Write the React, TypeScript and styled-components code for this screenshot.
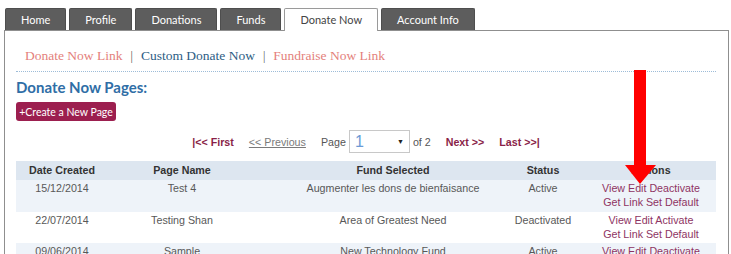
import styled, { createGlobalStyle } from "styled-components";

const GlobalStyle = createGlobalStyle`
  html, body {
    margin: 0;
    padding: 0;
    overflow: hidden;
    background: #ffffff;
    font-family: "Liberation Sans", Arial, sans-serif;
  }
`;

const MAROON = "#8a1f48";
const ACTION = "#8e3463";

export const Page = styled.div`
  position: relative;
  padding: 8px 2px 0 4px;
  width: 725px;
`;

export const TabBar = styled.div`
  display: flex;
  flex-direction: row;
  gap: 3px;
  padding-left: 1px;
`;

export const Tab = styled.div<{ $active?: boolean }>`
  height: 22px;
  line-height: 22px;
  padding: 0 15px;
  font-family: Lato, "Open Sans", sans-serif;
  font-size: 11px;
  color: ${(p) => (p.$active ? "#444" : "#fff")};
  background: ${(p) => (p.$active ? "#fff" : "#5d5d5d")};
  border: 1px solid ${(p) => (p.$active ? "#9a9a9a" : "#4e4e4e")};
  border-bottom: none;
  border-radius: 2px 2px 0 0;
  margin-bottom: -1px;
  position: relative;
  z-index: ${(p) => (p.$active ? 2 : 0)};
`;

export const Panel = styled.div`
  border: 1px solid #8f8f8f;
  padding: 0 12px 40px 11px;
  position: relative;
  z-index: 1;
`;

export const LinksRow = styled.div`
  display: flex;
  align-items: center;
  gap: 8px;
  margin-top: 16px;
  padding: 0 0 6px 9px;
  height: 18px;
  border-bottom: 1px dotted #9dbcd8;
  font-family: "Liberation Serif", "Times New Roman", serif;
  font-size: 13.5px;
`;

export const NavLink = styled.span<{ $current?: boolean }>`
  color: ${(p) => (p.$current ? "#2d5d84" : "#e47f7c")};
`;

export const Sep = styled.span`
  color: #555;
  font-size: 12px;
`;

export const Heading = styled.h2`
  margin: 6px 0 0;
  font-family: Lato, "Open Sans", sans-serif;
  font-size: 15px;
  line-height: 18px;
  font-weight: 700;
  color: #2f6ea6;
`;

export const CreateButton = styled.button`
  display: block;
  margin-top: 6px;
  height: 19px;
  width: 100px;
  padding: 0;
  border: none;
  border-radius: 3px;
  background: #9c1f4f;
  color: #fff;
  font-family: Lato, "Open Sans", sans-serif;
  font-size: 10.5px;
`;

export const Pager = styled.div`
  display: flex;
  justify-content: center;
  align-items: center;
  gap: 15px;
  margin-top: 9px;
  height: 23px;
  font-size: 10.7px;
`;

export const PagerLink = styled.span<{ $muted?: boolean }>`
  color: ${(p) => (p.$muted ? "#7a7a7a" : MAROON)};
  font-weight: ${(p) => (p.$muted ? 400 : 700)};
  text-decoration: ${(p) => (p.$muted ? "underline" : "none")};
`;

export const PageGroup = styled.div`
  display: flex;
  align-items: center;
  gap: 3px;
  color: #555;
`;

export const SelectBox = styled.div`
  display: flex;
  align-items: center;
  justify-content: space-between;
  box-sizing: border-box;
  width: 61px;
  height: 23px;
  padding: 0 5px;
  border: 1px solid #c8c8c8;
  background: #fff;
`;

export const SelectValue = styled.span`
  color: #6b9ad6;
  font-size: 16px;
`;

export const Caret = styled.span`
  color: #222;
  font-size: 7px;
`;

export const Table = styled.div`
  margin-top: 8px;
  font-size: 10.7px;
`;

export const Row = styled.div<{ $tone: "head" | "tint" | "plain" }>`
  display: grid;
  grid-template-columns: 92px 148px 244px 86px 130px;
  background: ${(p) =>
    p.$tone === "head" ? "#dde6f0" : p.$tone === "tint" ? "#eef3f9" : "#fff"};
  color: ${(p) => (p.$tone === "head" ? "#333" : "#585858")};
  font-weight: ${(p) => (p.$tone === "head" ? 700 : 400)};
  line-height: ${(p) => (p.$tone === "head" ? "19px" : "14px")};
  padding: ${(p) => (p.$tone === "head" ? "0" : "1px 0 2.5px")};
  min-height: ${(p) => (p.$tone === "head" ? "19px" : "28px")};
`;

export const Cell = styled.div<{ $indent?: number }>`
  text-align: center;
  padding-left: ${(p) => p.$indent ?? 0}px;
`;

export const Actions = styled.div`
  text-align: center;
  color: ${ACTION};
`;

export const Arrow = styled.svg`
  position: absolute;
  left: 620px;
  top: 70px;
  z-index: 5;
`;

const tabs = ["Home", "Profile", "Donations", "Funds", "Donate Now", "Account Info"];

const rows = [
  { date: "15/12/2014", name: "Test 4", fund: "Augmenter les dons de bienfaisance", status: "Active", toggle: "Deactivate" },
  { date: "22/07/2014", name: "Testing Shan", fund: "Area of Greatest Need", status: "Deactivated", toggle: "Activate" },
  { date: "09/06/2014", name: "Sample", fund: "New Technology Fund", status: "Active", toggle: "Deactivate" },
];

export default function App() {
  return (
    <>
      <GlobalStyle />
      <Page>
        <TabBar>
          {tabs.map((t) => (
            <Tab key={t} $active={t === "Donate Now"}>
              {t}
            </Tab>
          ))}
        </TabBar>
        <Panel>
          <LinksRow>
            <NavLink>Donate Now Link</NavLink>
            <Sep>|</Sep>
            <NavLink $current>Custom Donate Now</NavLink>
            <Sep>|</Sep>
            <NavLink>Fundraise Now Link</NavLink>
          </LinksRow>
          <Heading>Donate Now Pages:</Heading>
          <CreateButton>+Create a New Page</CreateButton>
          <Pager>
            <PagerLink>|&lt;&lt; First</PagerLink>
            <PagerLink $muted>&lt;&lt; Previous</PagerLink>
            <PageGroup>
              <span>Page</span>
              <SelectBox>
                <SelectValue>1</SelectValue>
                <Caret>▼</Caret>
              </SelectBox>
              <span>of 2</span>
            </PageGroup>
            <PagerLink>Next &gt;&gt;</PagerLink>
            <PagerLink>Last &gt;&gt;|</PagerLink>
          </Pager>
          <Table>
            <Row $tone="head">
              <Cell>Date Created</Cell>
              <Cell>Page Name</Cell>
              <Cell $indent={30}>Fund Selected</Cell>
              <Cell>Status</Cell>
              <Cell>Actions</Cell>
            </Row>
            {rows.map((r, i) => (
              <Row key={r.date} $tone={i % 2 === 0 ? "tint" : "plain"}>
                <Cell>{r.date}</Cell>
                <Cell>{r.name}</Cell>
                <Cell $indent={30}>{r.fund}</Cell>
                <Cell>{r.status}</Cell>
                <Actions>
                  View Edit {r.toggle}
                  <br />
                  Get Link Set Default
                </Actions>
              </Row>
            ))}
          </Table>
        </Panel>
        <Arrow width="40" height="118" viewBox="0 0 40 118">
          <rect x="14" y="0" width="12" height="97" fill="#ff0000" />
          <polygon points="5,95 36,95 20,114" fill="#ff0000" />
        </Arrow>
      </Page>
    </>
  );
}
